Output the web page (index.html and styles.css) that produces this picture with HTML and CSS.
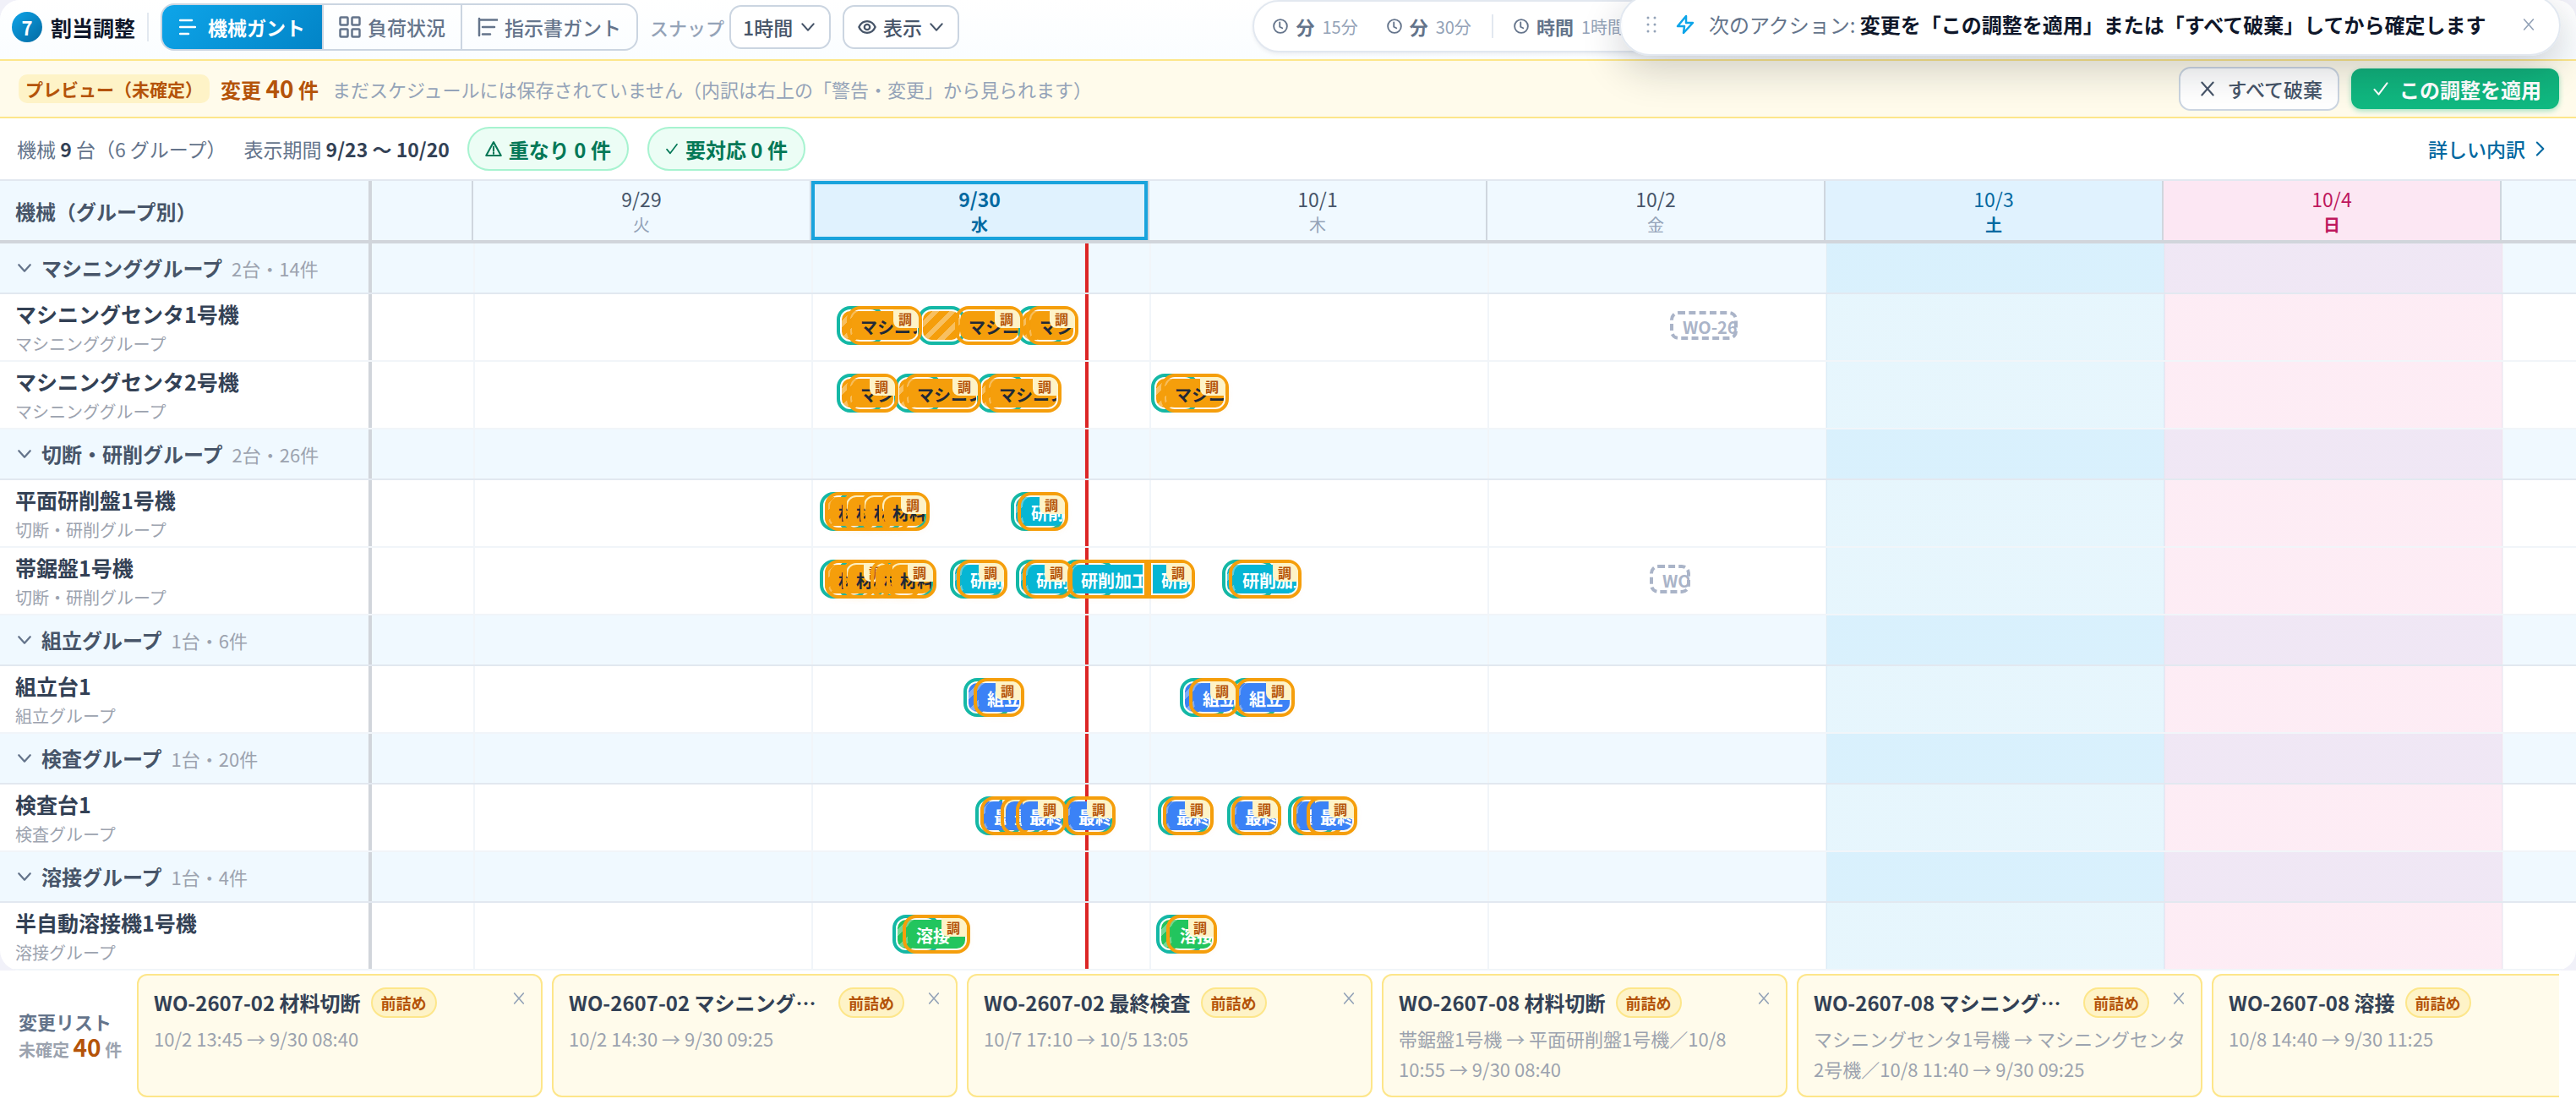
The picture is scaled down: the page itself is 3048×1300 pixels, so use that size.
FILE: index.html
```html
<!DOCTYPE html>
<html lang="ja">
<head>
<meta charset="utf-8">
<meta name="viewport" content="width=device-width, initial-scale=1">
<title>割当調整</title>
<link rel="stylesheet" href="styles.css">
</head>
<body>
<svg class="defs" width="0" height="0" aria-hidden="true">
  <symbol id="i-x" viewBox="0 0 24 24"><path d="M4 3l16 18M20 3L4 21"/></symbol>
  <symbol id="i-check" viewBox="0 0 24 24"><path d="M3 13l6 7L21 4"/></symbol>
  <symbol id="i-down" viewBox="0 0 24 24"><path d="M3 7l9 10 9-10"/></symbol>
  <symbol id="i-right" viewBox="0 0 24 24"><path d="M7 3l9 9-9 9"/></symbol>
  <symbol id="i-clock" viewBox="0 0 24 24"><circle cx="12" cy="12" r="10.5"/><path d="M11 6v7l4 2"/></symbol>
</svg>
<div class="app">
  <main class="panel">
    <header class="toolbar">
      <span class="step">7</span>
      <h1 class="title">割当調整</h1>
      <span class="rule"></span>
      <div class="tabs">
        <button class="tab tab-on" type="button"><svg class="ic20" viewBox="0 0 20 20"><path d="M1 2h14M1 10h18M1 18h10"/></svg>機械ガント</button>
        <button class="tab" type="button"><svg class="ic26" viewBox="0 0 26 26"><rect x="1.5" y="1.5" width="9" height="9" rx="1"/><rect x="15.5" y="1.5" width="9" height="9" rx="1"/><rect x="1.5" y="15.5" width="9" height="9" rx="1"/><rect x="15.5" y="15.5" width="9" height="9" rx="1"/></svg>負荷状況</button>
        <button class="tab" type="button"><svg class="ic24" viewBox="0 0 24 24"><path d="M2 2v20M2 3.5h22M6 12h14M6 20.5h9"/></svg>指示書ガント</button>
      </div>
      <label class="snap" for="snap">スナップ</label>
      <span class="pick">
        <select id="snap" class="select"><option>1時間</option></select>
        <svg class="ic18 pick-arrow"><use href="#i-down"/></svg>
      </span>
      <button class="btn view" type="button"><svg class="ic22" viewBox="0 0 24 24"><path d="M1.5 12C4 6.5 8 4.5 12 4.5s8 2 10.500 7.500C20 17.500 16 19.500 12 19.500S4 17.500 1.500 12z"/><circle cx="12" cy="12" r="3.5"/></svg>表示<svg class="ic18"><use href="#i-down"/></svg></button>
      <div class="scale">
        <button class="scale-item" type="button"><svg class="ic18"><use href="#i-clock"/></svg><b>分</b>15分</button>
        <button class="scale-item" type="button"><svg class="ic18"><use href="#i-clock"/></svg><b>分</b>30分</button>
        <span class="scale-rule"></span>
        <button class="scale-item" type="button"><svg class="ic18"><use href="#i-clock"/></svg><b>時間</b>1時間</button>
      </div>
    </header>

    <section class="preview">
      <span class="tag">プレビュー（未確定）</span>
      <strong class="changes">変更 <span class="big">40</span> 件</strong>
      <span class="hint">まだスケジュールには保存されていません（内訳は右上の「警告・変更」から見られます）</span>
      <button class="btn discard" type="button"><svg class="ic20"><use href="#i-x"/></svg>すべて破棄</button>
      <button class="apply" type="button"><svg class="ic20"><use href="#i-check"/></svg>この調整を適用</button>
    </section>

    <section class="summary">
      <span>機械 <b>9</b> 台（6 グループ）</span>
      <span>表示期間 <b>9/23 〜 10/20</b></span>
      <span class="pills">
        <span class="pill"><svg class="ic20" viewBox="0 0 24 24"><path d="M12 2.5L1.5 21.5h21zM12 9v6M12 17.5v1.500"/></svg>重なり 0 件</span>
        <span class="pill"><svg class="ic16"><use href="#i-check"/></svg>要対応 0 件</span>
      </span>
      <a class="detail" href="#detail">詳しい内訳<svg class="ic20"><use href="#i-right"/></svg></a>
    </section>

    <section class="gantt">
      <div class="row head">
        <div class="name">機械（グループ別）</div>
        <div class="days">
          <div class="day"></div>
          <div class="day">9/29<small>火</small></div>
          <div class="day today">9/30<small>水</small></div>
          <div class="day">10/1<small>木</small></div>
          <div class="day">10/2<small>金</small></div>
          <div class="day sat">10/3<small>土</small></div>
          <div class="day sun">10/4<small>日</small></div>
          <div class="day"></div>
        </div>
      </div>

      <div class="row group"><button class="name" type="button"><svg class="ic18"><use href="#i-down"/></svg><b>マシニンググループ</b>2台・14件</button><div class="lane"></div></div>
      <div class="row"><div class="name"><b>マシニングセンタ1号機</b><small>マシニンググループ</small></div>
        <div class="lane">
          <i class="bar setup mc" style="left:556px;width:44px"></i><i class="bar setup mc" style="left:652px;width:44px"></i><i class="bar setup mc" style="left:770px;width:44px"></i>
          <div class="bar mc" style="left:568px;width:77px"><span>マシニング</span><em>調</em></div>
          <div class="bar mc" style="left:696px;width:69px"><span>マシニング</span><em>調</em></div>
          <div class="bar mc" style="left:780px;width:50px"><span>マシニング</span><em>調</em></div>
          <div class="ghost" style="left:1536px;width:80px"><span>WO-2607</span></div>
        </div></div>
      <div class="row"><div class="name"><b>マシニングセンタ2号機</b><small>マシニンググループ</small></div>
        <div class="lane">
          <i class="bar setup mc" style="left:556px;width:44px"></i><i class="bar setup mc" style="left:624px;width:44px"></i><i class="bar setup mc" style="left:722px;width:44px"></i><i class="bar setup mc" style="left:928px;width:44px"></i>
          <div class="bar mc" style="left:568px;width:49px"><span>マシニング</span><em>調</em></div>
          <div class="bar mc" style="left:635px;width:80px"><span>マシニング</span><em>調</em></div>
          <div class="bar mc" style="left:732px;width:78px"><span>マシニング</span><em>調</em></div>
          <div class="bar mc" style="left:940px;width:68px"><span>マシニング</span><em>調</em></div>
        </div></div>

      <div class="row group"><button class="name" type="button"><svg class="ic18"><use href="#i-down"/></svg><b>切断・研削グループ</b>2台・26件</button><div class="lane"></div></div>
      <div class="row"><div class="name"><b>平面研削盤1号機</b><small>切断・研削グループ</small></div>
        <div class="lane">
          <i class="bar setup mc" style="left:536px;width:44px"></i><i class="bar setup mc" style="left:557px;width:44px"></i><i class="bar setup mc" style="left:578px;width:44px"></i><i class="bar setup mc" style="left:600px;width:50px"></i><i class="bar setup gr" style="left:762px;width:50px"></i>
          <div class="bar mc" style="left:542px;width:48px"><span>材料切断</span><em>調</em></div>
          <div class="bar mc" style="left:563px;width:48px"><span>材料切断</span><em>調</em></div>
          <div class="bar mc" style="left:584px;width:48px"><span>材料切断</span><em>調</em></div>
          <div class="bar mc" style="left:606px;width:48px"><span>材料切断</span><em>調</em></div>
          <div class="bar gr" style="left:770px;width:48px"><span>研削加工</span><em>調</em></div>
        </div></div>
      <div class="row"><div class="name"><b>帯鋸盤1号機</b><small>切断・研削グループ</small></div>
        <div class="lane">
          <i class="bar setup mc" style="left:536px;width:44px"></i><i class="bar setup mc" style="left:557px;width:44px"></i><i class="bar setup mc" style="left:608px;width:50px"></i><i class="bar setup gr" style="left:690px;width:50px"></i><i class="bar setup gr" style="left:768px;width:50px"></i><i class="bar setup gr" style="left:822px;width:50px"></i><i class="bar setup gr" style="left:1012px;width:50px"></i>
          <div class="bar mc" style="left:542px;width:48px"><span>材料切断</span><em>調</em></div>
          <div class="bar mc" style="left:563px;width:47px"><span>材料切断</span><em>調</em></div>
          <div class="bar mc" style="left:596px;width:48px"><span>材料切断</span><em>調</em></div>
          <div class="bar mc" style="left:615px;width:47px"><span>材料切断</span><em>調</em></div>
          <div class="bar gr" style="left:698px;width:48px"><span>研削加工</span><em>調</em></div>
          <div class="bar gr" style="left:776px;width:48px"><span>研削加工</span><em>調</em></div>
          <div class="bar gr cut-end" style="left:829px;width:83px"><span>研削加工</span></div>
          <div class="bar gr cut-start" style="left:924px;width:44px"><span>研削加工</span><em>調</em></div>
          <div class="bar gr" style="left:1020px;width:74px"><span>研削加工</span><em>調</em></div>
          <div class="ghost" style="left:1512px;width:48px"><span>WO-2607</span></div>
        </div></div>

      <div class="row group"><button class="name" type="button"><svg class="ic18"><use href="#i-down"/></svg><b>組立グループ</b>1台・6件</button><div class="lane"></div></div>
      <div class="row"><div class="name"><b>組立台1</b><small>組立グループ</small></div>
        <div class="lane">
          <i class="bar setup as" style="left:706px;width:44px"></i><i class="bar setup as" style="left:962px;width:44px"></i><i class="bar setup as" style="left:1022px;width:44px"></i>
          <div class="bar as" style="left:718px;width:48px"><span>組立</span><em>調</em></div>
          <div class="bar as" style="left:973px;width:47px"><span>組立</span><em>調</em></div>
          <div class="bar as" style="left:1028px;width:58px"><span>組立</span><em>調</em></div>
        </div></div>

      <div class="row group"><button class="name" type="button"><svg class="ic18"><use href="#i-down"/></svg><b>検査グループ</b>1台・20件</button><div class="lane"></div></div>
      <div class="row"><div class="name"><b>検査台1</b><small>検査グループ</small></div>
        <div class="lane">
          <i class="bar setup as" style="left:720px;width:44px"></i><i class="bar setup as" style="left:744px;width:44px"></i><i class="bar setup as" style="left:822px;width:48px"></i><i class="bar setup as" style="left:936px;width:48px"></i><i class="bar setup as" style="left:1018px;width:52px"></i><i class="bar setup as" style="left:1090px;width:44px"></i>
          <div class="bar as" style="left:726px;width:48px"><span>最終検査</span><em>調</em></div>
          <div class="bar as" style="left:750px;width:48px"><span>最終検査</span><em>調</em></div>
          <div class="bar as" style="left:768px;width:48px"><span>最終検査</span><em>調</em></div>
          <div class="bar as" style="left:826px;width:48px"><span>最終検査</span><em>調</em></div>
          <div class="bar as" style="left:942px;width:48px"><span>最終検査</span><em>調</em></div>
          <div class="bar as" style="left:1023px;width:47px"><span>最終検査</span><em>調</em></div>
          <div class="bar as" style="left:1096px;width:48px"><span>最終検査</span><em>調</em></div>
          <div class="bar as" style="left:1112px;width:48px"><span>最終検査</span><em>調</em></div>
        </div></div>

      <div class="row group"><button class="name" type="button"><svg class="ic18"><use href="#i-down"/></svg><b>溶接グループ</b>1台・4件</button><div class="lane"></div></div>
      <div class="row"><div class="name"><b>半自動溶接機1号機</b><small>溶接グループ</small></div>
        <div class="lane">
          <i class="bar setup we" style="left:622px;width:44px"></i><i class="bar setup we" style="left:934px;width:44px"></i>
          <div class="bar we" style="left:634px;width:68px"><span>溶接</span><em>調</em></div>
          <div class="bar we" style="left:946px;width:48px"><span>溶接</span><em>調</em></div>
        </div></div>
    </section>
  </main>

  <footer class="changelist">
    <div class="label"><b>変更リスト</b><span>未確定 <strong class="big">40</strong> 件</span></div>
    <div class="cards">
      <article class="card"><div class="card-top"><h2>WO-2607-02 材料切断</h2><span class="chip">前詰め</span><button class="close" type="button" aria-label="取り消す"><svg class="ic16"><use href="#i-x"/></svg></button></div><p>10/2 13:45 → 9/30 08:40</p></article>
      <article class="card"><div class="card-top"><h2>WO-2607-02 マシニング加工</h2><span class="chip">前詰め</span><button class="close" type="button" aria-label="取り消す"><svg class="ic16"><use href="#i-x"/></svg></button></div><p>10/2 14:30 → 9/30 09:25</p></article>
      <article class="card"><div class="card-top"><h2>WO-2607-02 最終検査</h2><span class="chip">前詰め</span><button class="close" type="button" aria-label="取り消す"><svg class="ic16"><use href="#i-x"/></svg></button></div><p>10/7 17:10 → 10/5 13:05</p></article>
      <article class="card"><div class="card-top"><h2>WO-2607-08 材料切断</h2><span class="chip">前詰め</span><button class="close" type="button" aria-label="取り消す"><svg class="ic16"><use href="#i-x"/></svg></button></div><p>帯鋸盤1号機 → 平面研削盤1号機／10/8 10:55 → 9/30 08:40</p></article>
      <article class="card"><div class="card-top"><h2>WO-2607-08 マシニング加工</h2><span class="chip">前詰め</span><button class="close" type="button" aria-label="取り消す"><svg class="ic16"><use href="#i-x"/></svg></button></div><p>マシニングセンタ1号機 → マシニングセンタ2号機／10/8 11:40 → 9/30 09:25</p></article>
      <article class="card"><div class="card-top"><h2>WO-2607-08 溶接</h2><span class="chip">前詰め</span><button class="close" type="button" aria-label="取り消す"><svg class="ic16"><use href="#i-x"/></svg></button></div><p>10/8 14:40 → 9/30 11:25</p></article>
    </div>
  </footer>

  <aside class="toast">
    <svg class="grip" viewBox="0 0 12 20"><g fill="currentColor" stroke="none"><circle cx="2" cy="2" r="1.5"/><circle cx="10" cy="2" r="1.5"/><circle cx="2" cy="10" r="1.5"/><circle cx="10" cy="10" r="1.5"/><circle cx="2" cy="18" r="1.5"/><circle cx="10" cy="18" r="1.5"/></g></svg>
    <svg class="bolt" viewBox="0 0 24 24"><path d="M13 2L3 14h8l-1 8 11-12h-8z"/></svg>
    <span class="toast-text">次のアクション: <b>変更を「この調整を適用」または「すべて破棄」してから確定します</b></span>
    <button class="close" type="button" aria-label="閉じる"><svg class="ic16"><use href="#i-x"/></svg></button>
  </aside>
</div>
</body>
</html>
```
FILE: styles.css
```css
* { box-sizing: border-box; }
body {
  margin: 0;
  background: #f1f1f9;
  color: #64748b;
  font-family: "Noto Sans CJK JP", "Noto Sans", sans-serif;
  font-size: 23px;
}
button, select { font: inherit; color: inherit; margin: 0; padding: 0; border: 0; background: none; cursor: pointer; }
h1, h2, p { margin: 0; }
svg { flex: none; fill: none; stroke: currentColor; stroke-width: 2.5; stroke-linecap: round; stroke-linejoin: round; }
.defs { position: absolute; }
.ic16 { width: 16px; height: 16px; }
.ic18 { width: 18px; height: 18px; }
.ic20 { width: 20px; height: 20px; }
.ic22 { width: 22px; height: 22px; }
.ic24 { width: 24px; height: 24px; }
.ic26 { width: 26px; height: 26px; }
.big { font-size: 28px; line-height: 28px; font-weight: 700; color: #b45309; }

.app { position: relative; display: flex; flex-direction: column; min-height: 100vh; overflow: hidden; }
.panel { position: relative; background: #fff; border-radius: 24px; overflow: hidden; box-shadow: 0 0 0 24px #f1f1f9; clip-path: inset(0); }

/* toolbar */
.toolbar { display: flex; align-items: center; height: 70px; padding: 0 14px 6px; background: linear-gradient(#fff, #fafdff); }
.step { display: grid; place-items: center; width: 36px; height: 36px; border-radius: 50%; background: linear-gradient(135deg, #0ea5e9, #0369a1); color: #fff; font-size: 22px; font-weight: 700; }
.title { margin-left: 10px; font-size: 25px; font-weight: 700; color: #0f172a; }
.rule { width: 2px; height: 34px; margin: 0 14px 0 14px; background: #e2e8f0; }
.tabs { display: flex; height: 56px; border: 2px solid #cbd5e1; border-radius: 16px; overflow: hidden; }
.tab { display: flex; align-items: center; gap: 8px; padding: 0 18px; font-weight: 500; }
.tab + .tab { border-left: 2px solid #cbd5e1; }
.tab-on { gap: 14px; padding: 0 20px; background: linear-gradient(135deg, #0ea5e9, #0284c7); color: #fff; font-weight: 700; }
.snap { margin: 0 6px 0 14px; font-size: 22px; font-weight: 500; color: #94a3b8; }
.btn, .select { height: 52px; border: 2px solid #cbd5e1; border-radius: 14px; background: #fff; color: #475569; font-weight: 500; }
.pick { display: flex; position: relative; }
.select { width: 120px; padding: 0 14px; appearance: none; }
.pick-arrow { position: absolute; right: 18px; top: 17px; color: #475569; pointer-events: none; }
.btn { display: flex; align-items: center; gap: 10px; padding: 0 16px; }
.view { gap: 8px; margin-left: 14px; }
.scale { display: flex; align-items: center; align-self: flex-start; gap: 34px; height: 62px; margin-left: auto; padding: 0 120px 0 22px; margin-right: 990px; border: 2px solid #e2e8f0; border-radius: 31px; background: #fff; box-shadow: 0 2px 4px #0f172a10; }
.scale-item { display: flex; align-items: center; gap: 9px; font-size: 20px; color: #94a3b8; white-space: nowrap; }
.scale-item b { font-size: 22px; color: #64748b; }
.scale-item svg { color: #64748b; }
.scale-rule { width: 2px; height: 28px; margin: 0 -10px; background: #e2e8f0; }

/* preview bar */
.preview { display: flex; align-items: center; height: 70px; padding: 0 20px 0 22px; border: solid #fde68a; border-width: 2px 0; background: #fffbeb; }
.tag { padding: 0 8px; border-radius: 10px; background: #fef3c7; color: #b45309; font-size: 21px; line-height: 34px; font-weight: 700; }
.changes { margin-left: 13px; font-size: 24px; color: #b45309; }
.hint { margin-left: 16px; margin-right: auto; font-size: 22px; color: #94a3b8; }
.discard { gap: 14px; padding: 0 18px 0 22px; }
.apply { display: flex; align-items: center; gap: 12px; height: 48px; margin-left: 14px; padding: 0 21px 0 25px; border-radius: 12px; background: linear-gradient(#10b07a, #10b981); color: #fff; font-size: 24px; font-weight: 700; box-shadow: 0 2px 6px #10b98166; }

/* summary bar */
.summary { display: flex; align-items: center; gap: 21px; height: 74px; padding: 0 32px 0 20px; border-bottom: 2px solid #e2e8f0; }
.summary b { color: #334155; }
.pills { display: flex; gap: 22px; }
.pill { display: flex; align-items: center; gap: 8px; height: 52px; padding: 0 19px; border: 2px solid #a7f3d0; border-radius: 26px; background: #ecfdf5; color: #047857; font-size: 24px; font-weight: 700; }
.detail { display: flex; align-items: center; gap: 8px; margin-left: auto; color: #0369a1; font-weight: 500; text-decoration: none; }

/* gantt */
.gantt { --first: 120px; --day: 400px; --now: 844px; }
.row { display: flex; height: 80px; border-bottom: 2px solid #f1f5f9; }
.name { flex: none; display: flex; flex-direction: column; width: 440px; padding: 5px 18px 0; border-right: 4px solid #d1d5db; white-space: nowrap; }
.name b { font-size: 25px; line-height: 36px; color: #334155; }
.name small { font-size: 20px; line-height: 36px; color: #9ca3af; }
.lane {
  position: relative; flex: 1; min-width: 0; overflow: hidden;
  background-image:
    linear-gradient(#dc2626, #dc2626),
    linear-gradient(#0ea5e91a, #0ea5e91a),
    linear-gradient(#ec48991a, #ec48991a),
    linear-gradient(90deg, #f1f5f9 2px, transparent 2px);
  background-size: 4px 100%, 400px 100%, 400px 100%, var(--day) 100%;
  background-position: var(--now) 0, 1721px 0, 2121px 0, var(--first) 0;
  background-repeat: no-repeat, no-repeat, no-repeat, repeat-x;
}
.group { height: 60px; border-color: #e2e8f0; background: #f0f9ff; }
.group .name { flex-direction: row; align-items: center; gap: 11px; padding-top: 0; padding-left: 20px; font-size: 22px; color: #9ca3af; }
.group b { font-size: 24px; color: #475569; }
.group svg { color: #64748b; stroke-width: 3; }
.head { height: 74px; border-bottom: 4px solid #d1d5db; background: #f0f9ff; }
.head .name { justify-content: center; padding-top: 0; font-size: 24px; font-weight: 700; color: #475569; }
.days { display: flex; flex: 1; min-width: 0; overflow: hidden; }
.day { flex: none; display: flex; flex-direction: column; align-items: center; width: var(--day); padding-top: 5px; border-right: 2px solid #cfd6de; line-height: 32px; color: #475569; }
.day:first-child { width: var(--first); }
.day small { font-size: 20px; line-height: 30px; color: #94a3b8; }
.today { background: #e0f2fe; font-weight: 700; box-shadow: inset 0 0 0 4px #1aa3dc; }
.sat { background: #e0f2fe; }
.sun { background: #fce7f3; }
.today, .today small, .sat, .sat small { color: #0369a1; }
.sun, .sun small { color: #be185d; }
.sat small, .sun small { font-weight: 700; }

.bar { position: absolute; top: 20px; height: 34px; border-radius: 10px; background-color: var(--fill); outline: 4px solid #f59e0b; outline-offset: 2px; color: #fff; font-size: 20px; font-weight: 700; box-shadow: 0 2px 8px 4px #f59e0b14; }
.bar span { display: block; height: 34px; padding-left: 10px; border-radius: inherit; line-height: 38px; white-space: nowrap; overflow: hidden; }
.bar em { position: absolute; top: -2px; right: -2px; width: 30px; height: 22px; padding-left: 6px; border-radius: 0 11px 0 8px; background: #fef3c7; color: #b45309; font-size: 16px; line-height: 22px; font-style: normal; }
.setup { outline-color: #14b8a6; background-image: repeating-linear-gradient(135deg, transparent 0 8px, #ffffff59 8px 14px); box-shadow: none; }
.mc { --fill: #f59e0b; color: #1f2937; }
.gr { --fill: #06b6d4; }
.as { --fill: #3b82f6; }
.we { --fill: #22c55e; }
.cut-end { border-radius: 10px 0 0 10px; }
.cut-start { border-radius: 0 10px 10px 0; }
.ghost { position: absolute; top: 20px; height: 34px; border: 4px dashed #aab4c8; border-radius: 10px; color: #aab4c8; font-size: 20px; font-weight: 700; }
.ghost span { display: block; margin-right: -3px; padding-left: 11px; line-height: 30px; overflow: hidden; white-space: nowrap; }

/* change list */
.changelist { display: flex; flex: 1; align-items: stretch; gap: 18px; margin-top: -24px; padding: 28px 20px 2px 22px; background: #fff; }
.label { flex: none; display: flex; flex-direction: column; justify-content: center; width: 122px; white-space: nowrap; }
.label b { font-size: 22px; line-height: 32px; }
.label span { font-size: 20px; line-height: 32px; font-weight: 700; color: #9ca3af; }
.label .big { color: #b45309; font-size: 28px; }
.cards { display: flex; flex: 1; gap: 11px; min-width: 0; overflow: hidden; }
.card { flex: none; width: 480px; padding: 14px 12px 14px 18px; border: 2px solid #fde68a; border-radius: 12px; background: #fffbeb; }
.card-top { display: flex; align-items: center; gap: 12px; height: 36px; margin-bottom: 6px; }
.card h2 { max-width: 307px; font-size: 24px; line-height: 36px; font-weight: 700; color: #334155; white-space: nowrap; overflow: hidden; text-overflow: ellipsis; }
.chip { flex: none; padding: 0 10px; border: 2px solid #fde68a; border-radius: 18px; background: #fef3c7; color: #b45309; font-size: 18px; line-height: 32px; font-weight: 700; }
.close { display: flex; color: #94a3b8; }
.card .close { align-self: flex-start; margin: 5px 6px 0 auto; }
.card p { min-height: 72px; font-size: 22px; line-height: 36px; color: #9ca3af; }

/* floating next-action notice */
.toast { position: absolute; top: -6px; right: 18px; display: flex; align-items: center; width: 1114px; height: 72px; padding: 0 28px 3px 30px; border: 2px solid #e2e8f0; border-radius: 36px; background: #fffffff7; box-shadow: 0 16px 48px #0f172a33; font-size: 24px; white-space: nowrap; }
.grip { width: 12px; height: 20px; color: #94a3b8; }
.bolt { width: 24px; height: 24px; margin: 0 16px 0 22px; color: #0ea5e9; }
.toast-text { color: #64748b; }
.toast b { color: #0f172a; }
.toast .close { margin-left: auto; }
```
